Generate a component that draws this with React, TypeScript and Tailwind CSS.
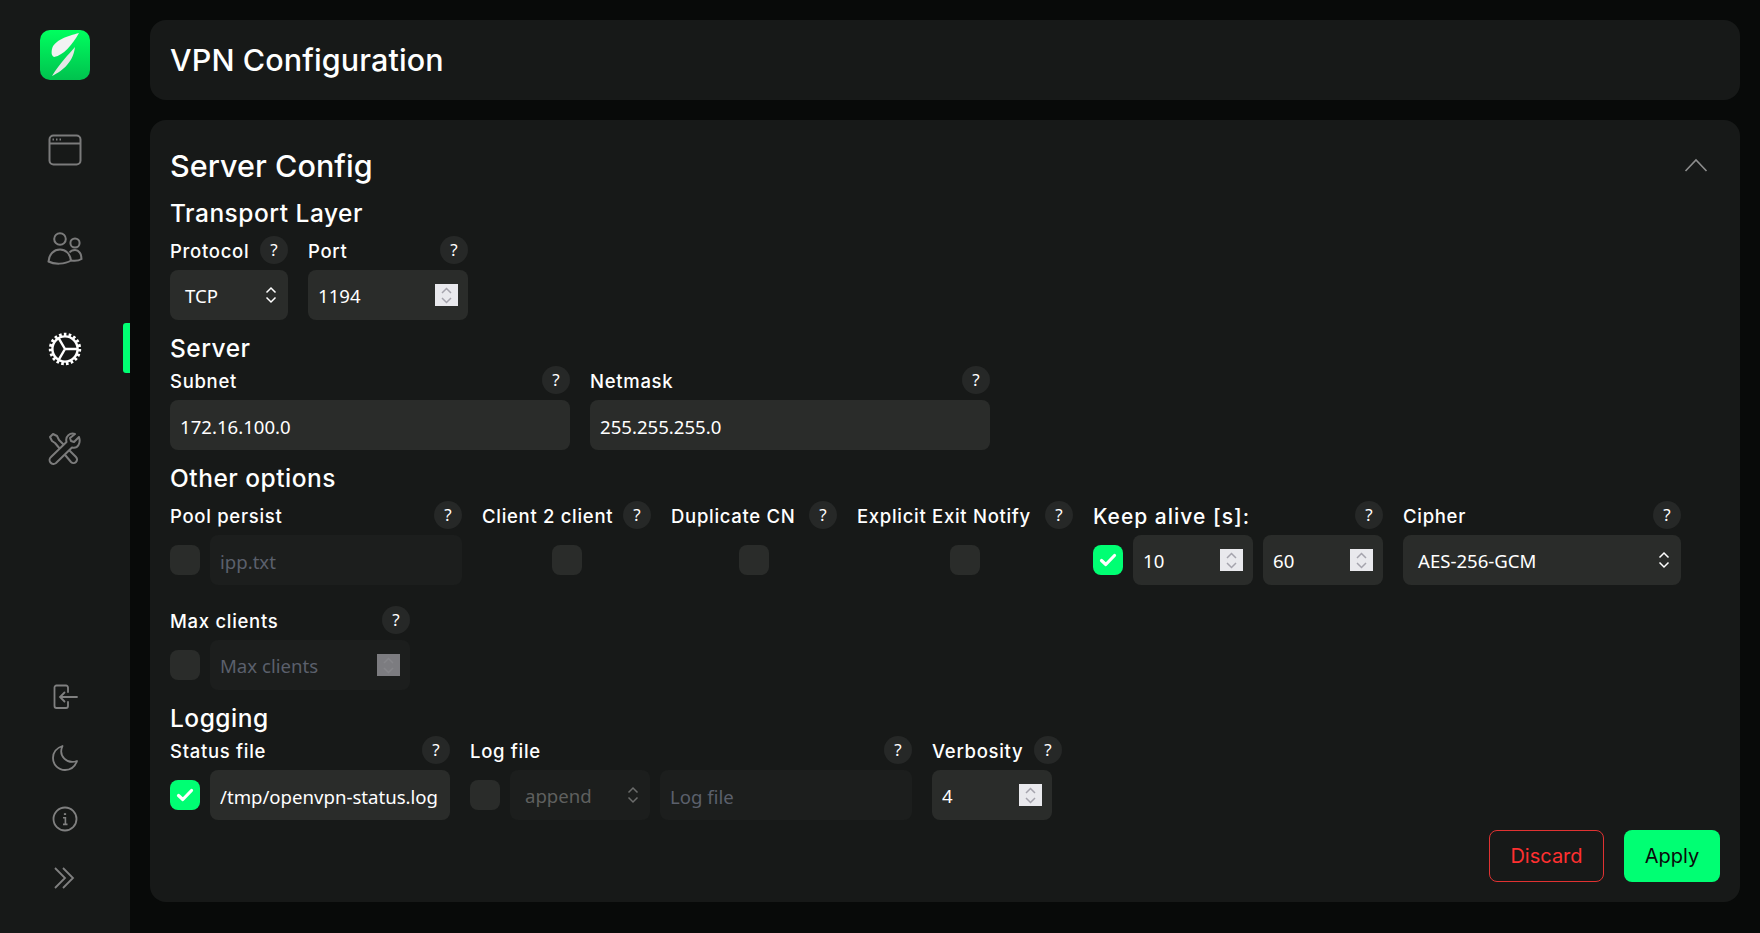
import React from "react";

const LABEL = "font-['Inter','Liberation_Sans',sans-serif]";
const VALUE = "font-['Noto_Sans','Open_Sans',sans-serif]";

function Help() {
  return (
    <span className={`${VALUE} flex h-7 w-7 shrink-0 items-center justify-center rounded-full bg-[#262827] text-[17px] text-white`}>?</span>
  );
}

function Field({ label, width, children, big }: { label: string; width: string; children: React.ReactNode; big?: boolean }) {
  return (
    <div className={`flex flex-col gap-[6px] ${width}`}>
      <div className="flex h-7 items-center justify-between">
        <span className={`${LABEL} whitespace-nowrap font-medium text-white ${big ? "mt-1 text-[21px] tracking-[1px]" : "mt-[3px] text-[18.5px] tracking-[0.7px]"}`}>{label}</span>
        <Help />
      </div>
      <div className="flex h-[50px] items-center gap-[10px]">{children}</div>
    </div>
  );
}

function Check({ on }: { on?: boolean }) {
  return (
    <span className={`flex h-[30px] w-[30px] shrink-0 items-center justify-center rounded-lg ${on ? "bg-[#00ff73]" : "bg-[#2a2c2a]"}`}>
      {on && (
        <svg width="18" height="14" viewBox="0 0 18 14" fill="none">
          <path d="M2.5 7.5 L6.8 11.5 L15.5 2.5" stroke="#fff" strokeWidth="3.2" strokeLinecap="round" strokeLinejoin="round" />
        </svg>
      )}
    </span>
  );
}

function Text({ value, placeholder, className = "flex-1" }: { value?: string; placeholder?: string; className?: string }) {
  const disabled = !value;
  return (
    <input
      readOnly
      value={value ?? ""}
      placeholder={placeholder}
      className={`${VALUE} h-[50px] min-w-0 rounded-lg px-[10px] pt-[2px] text-[18.6px] text-white outline-none placeholder:text-[#5b606c] ${disabled ? "bg-[#1c1e1d]" : "bg-[#2a2c2a]"} ${className}`}
    />
  );
}

function Spinner({ disabled }: { disabled?: boolean }) {
  return (
    <span className={`flex h-[22px] w-[23px] shrink-0 items-center justify-center ${disabled ? "bg-[#7c7c80]" : "bg-[#e9e9ed]"}`}>
      <svg width="11" height="17" viewBox="0 0 11 17" fill="none">
        <path d="M1 6 L5.5 1.5 L10 6 M1 11 L5.5 15.5 L10 11" stroke={disabled ? "#86868a" : "#a5a4ad"} strokeWidth="1.5" />
      </svg>
    </span>
  );
}

function NumberBox({ value, placeholder, className }: { value?: string; placeholder?: string; className: string }) {
  return (
    <div className={`flex h-[50px] items-center rounded-lg pl-[10px] pr-[10px] ${value ? "bg-[#2a2c2a]" : "bg-[#1c1e1d]"} ${className}`}>
      <input
        readOnly
        value={value ?? ""}
        placeholder={placeholder}
        className={`${VALUE} min-w-0 flex-1 bg-transparent pt-[2px] text-[18.6px] text-white outline-none placeholder:text-[#5b606c]`}
      />
      <Spinner disabled={!value} />
    </div>
  );
}

function SelectBox({ value, className, disabled }: { value: string; className: string; disabled?: boolean }) {
  return (
    <div className={`flex h-[50px] items-center justify-between rounded-lg pr-[11px] pl-[15px] ${disabled ? "bg-[#1c1e1d] text-[#5f605f]" : "bg-[#2a2c2a] text-white"} ${className}`}>
      <span className={`${VALUE} pt-[2px] text-[18.6px]`}>{value}</span>
      <svg width="12" height="18" viewBox="0 0 12 18" fill="none">
        <path d="M1.5 6.5 L6 2 L10.5 6.5 M1.5 11.5 L6 16 L10.5 11.5" stroke={disabled ? "#6b6c6b" : "#fff"} strokeWidth="1.5" />
      </svg>
    </div>
  );
}

function Heading({ children, className = "" }: { children: string; className?: string }) {
  return <h3 className={`${LABEL} h-9 text-[24.5px] leading-9 font-medium tracking-[0.5px] text-white ${className}`}>{children}</h3>;
}

function Logo() {
  return (
    <div className="flex h-[50px] w-[50px] items-center justify-center rounded-[10px] bg-gradient-to-b from-[#00ff5f] to-[#00c24e]">
      <svg width="50" height="50" viewBox="0 0 50 50">
        <path d="M39 3 C28 6 14 10 12 19 C11 24 12 26 14 27 C24 25 32 15 39 3 Z" fill="#f2f2f2" />
        <path d="M35 17 C29 24 20 33 12 46 C20 42 33 34 35 17 Z" fill="#e6e6e6" />
      </svg>
    </div>
  );
}

const iconStroke = "#7b7b7b";

function WindowIcon() {
  return (
    <svg width="34" height="32" viewBox="0 0 34 32" fill="none" stroke={iconStroke} strokeWidth="2">
      <rect x="1.5" y="1.5" width="31" height="29" rx="4" />
      <path d="M1.5 9.5 H32.5" />
      <path d="M4.5 5.5 H6 M8 5.5 H9.5 M11.5 5.5 H13" strokeWidth="2" />
    </svg>
  );
}
function UsersIcon() {
  return (
    <svg width="36" height="34" viewBox="0 0 36 34" fill="none" stroke={iconStroke} strokeWidth="2">
      <circle cx="13" cy="7" r="5.8" />
      <circle cx="28" cy="11" r="4.6" />
      <path d="M1.5 29.5 C2 22 7 17.5 13 17.5 C18.5 17.5 23 21.5 24 28.5 C18 32.5 7 32.5 1.5 29.5 Z" />
      <path d="M22.5 20.5 C24 18.5 26 18 28 18 C32 18 34.5 22 34.5 27 C31.5 29 27.5 29 24 28.5" />
    </svg>
  );
}
function GearIcon() {
  return (
    <svg width="34" height="34" viewBox="0 0 34 34" fill="none" stroke="#fff">
      <circle cx="17" cy="17" r="14.6" strokeWidth="3.2" strokeDasharray="2.6 2.2" />
      <circle cx="17" cy="17" r="12.6" strokeWidth="2.4" />
      <path d="M17 17 H29 M17 17 L10.8 6.3 M17 17 L10.8 27.7" strokeWidth="2.4" />
    </svg>
  );
}
function ToolsIcon() {
  return (
    <svg width="34" height="34" viewBox="0 0 34 34" fill="none" stroke={iconStroke} strokeWidth="2" strokeLinejoin="round">
      <path d="M2 5 L5 2 L9 4 L11 8 L28 25 A3.5 3.5 0 0 1 23 30 L7 11 L4 9 Z" />
      <path d="M31 5 L26 10 L23 9 L22 6 L27 2 C22 0.5 17 4 18.5 10 L3 25 A3.5 3.5 0 0 0 8 31 L24 15.5 C30 17 33 11 31 5 Z" fill="#171918" />
    </svg>
  );
}
function LogoutIcon() {
  return (
    <svg width="26" height="26" viewBox="0 0 26 26" fill="none" stroke="#808080" strokeWidth="1.8" strokeLinecap="round">
      <path d="M16 8 V3.5 A2 2 0 0 0 14 1.5 H4.5 A2 2 0 0 0 2.5 3.5 V22 A2 2 0 0 0 4.5 24 H14 A2 2 0 0 0 16 22 V18" />
      <path d="M25 13 H8 M12.5 8.5 L8 13 L12.5 17.5" />
    </svg>
  );
}
function MoonIcon() {
  return (
    <svg width="26" height="26" viewBox="0 0 26 26" fill="none" stroke="#808080" strokeWidth="1.8" strokeLinejoin="round">
      <path d="M10.5 1 C4.5 3 1 7.5 1 13 C1 20 6.5 25 13 25 C18.5 25 23 21.5 25 16 C15 19.5 6 11 10.5 1 Z" />
    </svg>
  );
}
function InfoIcon() {
  return (
    <svg width="26" height="26" viewBox="0 0 26 26" fill="none" stroke="#808080" strokeWidth="1.8">
      <circle cx="13" cy="13" r="11.5" />
      <path d="M13 7.2 V9" strokeWidth="2.2" />
      <path d="M11 11.7 H13.4 V18 M11 18.4 H15.5" strokeWidth="1.6" />
    </svg>
  );
}
function ChevronsIcon() {
  return (
    <svg width="22" height="22" viewBox="0 0 22 22" fill="none" stroke="#808080" strokeWidth="1.8">
      <path d="M1 1 L11 11 L1 21 M9 1 L19 11 L9 21" />
    </svg>
  );
}

export default function App() {
  return (
    <div className={`${LABEL} flex h-[933px] w-full overflow-hidden bg-[#080a09]`}>
      <aside className="relative flex h-full w-[130px] shrink-0 flex-col items-center bg-[#171918] pt-[30px] pb-[44px]">
        <Logo />
        <nav className="mt-[54px] flex flex-col items-center gap-[66px]">
          <WindowIcon />
          <UsersIcon />
          <GearIcon />
          <ToolsIcon />
        </nav>
        <div className="mt-auto flex flex-col items-center gap-[35px]">
          <LogoutIcon />
          <MoonIcon />
          <InfoIcon />
          <ChevronsIcon />
        </div>
        <span className="absolute top-[323px] right-0 h-[50px] w-[7px] rounded-l-[3px] bg-[#00ff73]" />
      </aside>

      <main className="flex min-w-0 flex-1 flex-col gap-5 pt-5 pr-5 pb-[31px] pl-5">
        <header className="flex h-20 shrink-0 items-center rounded-2xl bg-[#171918] px-5">
          <h1 className="text-[30.5px] font-medium tracking-[0.1px] text-white">VPN Configuration</h1>
        </header>

        <section className="flex flex-1 flex-col rounded-2xl bg-[#171918] px-5 pt-5 pb-5">
          <div className="flex h-[55px] shrink-0 items-start justify-between">
            <h2 className="text-[30.5px] leading-[52px] font-medium tracking-[0.05px] text-white">Server Config</h2>
            <svg className="mt-[18px] mr-[12px]" width="24" height="14" viewBox="0 0 24 14" fill="none">
              <path d="M1.5 13 L12 2 L22.5 13" stroke="#8d8d8d" strokeWidth="1.6" />
            </svg>
          </div>

          <Heading>Transport Layer</Heading>
          <div className="mt-[5px] flex gap-5">
            <Field label="Protocol" width="w-[118px]">
              <SelectBox value="TCP" className="w-full" />
            </Field>
            <Field label="Port" width="w-[160px]">
              <NumberBox value="1194" className="w-full" />
            </Field>
          </div>

          <Heading className="mt-[10px]">Server</Heading>
          <div className="flex gap-5">
            <Field label="Subnet" width="w-[400px]">
              <Text value="172.16.100.0" />
            </Field>
            <Field label="Netmask" width="w-[400px]">
              <Text value="255.255.255.0" />
            </Field>
          </div>

          <Heading className="mt-[10px]">Other options</Heading>
          <div className="mt-[5px] flex flex-wrap gap-x-5 gap-y-[21px]">
            <Field label="Pool persist" width="w-[292px]">
              <Check />
              <Text placeholder="ipp.txt" />
            </Field>
            <Field label="Client 2 client" width="w-[169px]">
              <span className="mx-auto"><Check /></span>
            </Field>
            <Field label="Duplicate CN" width="w-[166px]">
              <span className="mx-auto"><Check /></span>
            </Field>
            <Field label="Explicit Exit Notify" width="w-[216px]">
              <span className="mx-auto"><Check /></span>
            </Field>
            <Field label="Keep alive [s]:" width="w-[290px]" big>
              <Check on />
              <NumberBox value="10" className="w-[120px]" />
              <NumberBox value="60" className="w-[120px]" />
            </Field>
            <Field label="Cipher" width="w-[278px]">
              <SelectBox value="AES-256-GCM" className="w-full" />
            </Field>
            <Field label="Max clients" width="w-[240px]">
              <Check />
              <NumberBox placeholder="Max clients" className="min-w-0 flex-1" />
            </Field>
          </div>

          <Heading className="mt-[10px]">Logging</Heading>
          <div className="flex gap-5">
            <Field label="Status file" width="w-[280px]">
              <Check on />
              <Text value="/tmp/openvpn-status.log" />
            </Field>
            <Field label="Log file" width="w-[442px]">
              <Check />
              <SelectBox value="append" disabled className="w-[140px] shrink-0" />
              <Text placeholder="Log file" />
            </Field>
            <div className="flex w-[130px] flex-col gap-[6px]">
              <div className="flex h-7 items-center justify-between">
                <span className="mt-[3px] text-[18.5px] font-medium tracking-[0.7px] text-white">Verbosity</span>
                <Help />
              </div>
              <NumberBox value="4" className="w-[120px]" />
            </div>
          </div>

          <div className="mt-[10px] flex justify-end gap-5">
            <button className="flex h-[52px] w-[115px] items-center justify-center rounded-lg border border-[#e03232] text-[20px] text-[#ff3030]">Discard</button>
            <button className="flex h-[52px] w-[96px] items-center justify-center rounded-lg bg-[#00ff73] text-[20px] text-[#0a0a0a]">Apply</button>
          </div>
        </section>
      </main>
    </div>
  );
}
